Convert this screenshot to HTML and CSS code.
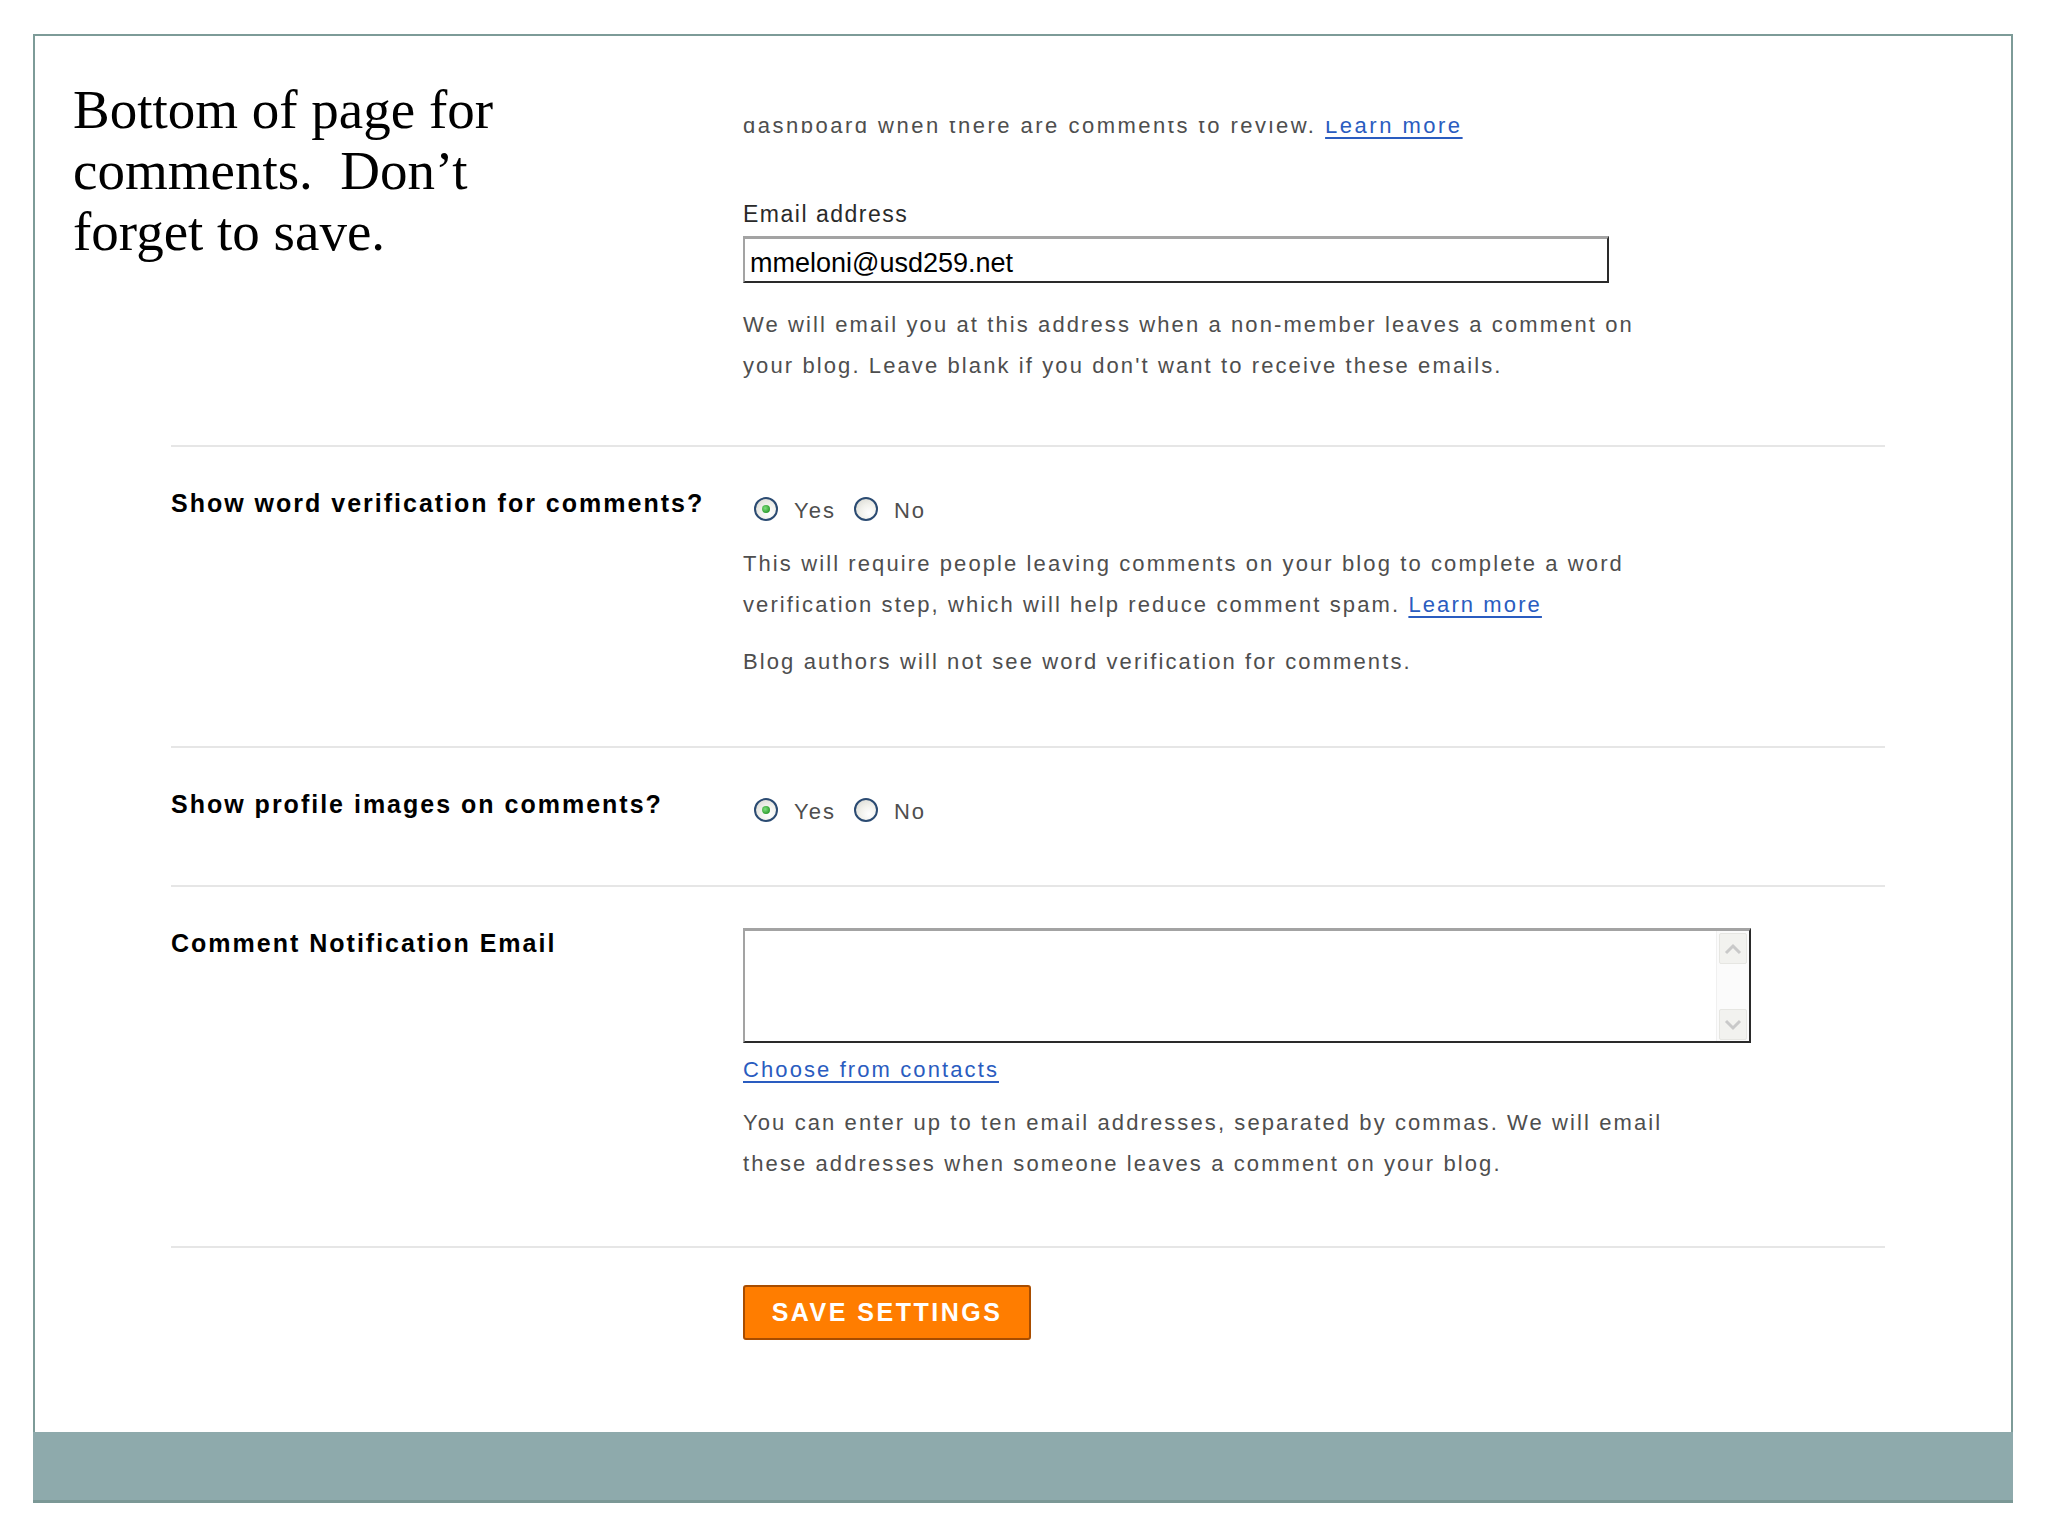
FILE: index.html
```html
<!DOCTYPE html>
<html>
<head>
<meta charset="utf-8">
<title>Comment settings</title>
<link rel="stylesheet" href="styles.css">
</head>
<body>
<div class="slide">
  <div class="frame">
    <div class="top">
      <h1 class="title">Bottom of page for<br>comments.&nbsp; Don’t<br>forget to save.</h1>
      <div class="top-right">
        <div class="clip"><p class="help cut">dashboard when there are comments to review. <a class="link" href="#">Learn more</a></p></div>
        <div class="field-label">Email address</div>
        <div class="input">mmeloni@usd259.net</div>
        <p class="help gap-para">We will email you at this address when a non-member leaves a comment on<br>your blog. Leave blank if you don't want to receive these emails.</p>
      </div>
    </div>

    <div class="rows">
      <div class="row row-verify">
        <div class="label">Show word verification for comments?</div>
        <div class="ctrl">
          <div class="radios">
            <span class="radio checked"></span><span class="opt">Yes</span>
            <span class="radio"></span><span class="opt">No</span>
          </div>
          <p class="help after-radio">This will require people leaving comments on your blog to complete a word<br>verification step, which will help reduce comment spam. <a class="link" href="#">Learn more</a></p>
          <p class="help note">Blog authors will not see word verification for comments.</p>
        </div>
      </div>

      <div class="row row-profile">
        <div class="label">Show profile images on comments?</div>
        <div class="ctrl">
          <div class="radios">
            <span class="radio checked"></span><span class="opt">Yes</span>
            <span class="radio"></span><span class="opt">No</span>
          </div>
        </div>
      </div>

      <div class="row row-notify">
        <div class="label">Comment Notification Email</div>
        <div class="ctrl">
          <div class="textarea">
            <div class="sb">
              <span class="sb-btn"><svg width="20" height="12" viewBox="0 0 20 12"><path d="M3 10 L10 3 L17 10" fill="none" stroke="#c9c9c9" stroke-width="3"/></svg></span>
              <span class="sb-btn"><svg width="20" height="12" viewBox="0 0 20 12"><path d="M3 2 L10 9 L17 2" fill="none" stroke="#c9c9c9" stroke-width="3"/></svg></span>
            </div>
          </div>
          <a class="link contacts" href="#">Choose from contacts</a>
          <p class="help after-link">You can enter up to ten email addresses, separated by commas. We will email<br>these addresses when someone leaves a comment on your blog.</p>
        </div>
      </div>

      <div class="row row-save">
        <div class="label"></div>
        <div class="ctrl">
          <button class="save" type="button">SAVE SETTINGS</button>
        </div>
      </div>
    </div>
  </div>
  <div class="bar"></div>
</div>
</body>
</html>
```

FILE: styles.css
```css
html, body {
  margin: 0;
  padding: 0;
  background: #ffffff;
}

.slide {
  width: 1980px;
  margin: 34px 0 0 33px;
}

.frame {
  box-sizing: border-box;
  height: 1398px;
  border: 2px solid #7d9b98;
  border-bottom: none;
  background: #ffffff;
  overflow: hidden;
}

.bar {
  height: 68px;
  background: #8eaaac;
  border-bottom: 3px solid #7b9896;
}

/* top section */
.top {
  display: flex;
  align-items: flex-start;
}

.title {
  box-sizing: border-box;
  width: 708px;
  margin: 43px 0 0 0;
  padding-left: 38px;
  font-family: "Liberation Serif", serif;
  font-weight: normal;
  font-size: 55px;
  line-height: 61px;
  color: #000000;
  white-space: nowrap;
}

.top-right {
  padding-top: 85px;
}

.clip {
  height: 23px;
  overflow: hidden;
}

.help {
  margin: 0;
  font-family: "Liberation Sans", Arial, sans-serif;
  font-size: 22px;
  line-height: 41px;
  letter-spacing: 2.1px;
  color: #4e4e4e;
  white-space: nowrap;
}

.help.cut {
  margin-top: -16px;
  letter-spacing: 2.5px;
}

.link {
  color: #2a5cc0;
  text-decoration: underline;
  text-decoration-thickness: 2px;
  text-underline-offset: 4px;
}

.field-label {
  margin-top: 56px;
  font-family: "Liberation Sans", Arial, sans-serif;
  font-size: 23px;
  line-height: 28px;
  letter-spacing: 1.5px;
  color: #2a2a2a;
}

.input {
  box-sizing: border-box;
  width: 866px;
  height: 47px;
  margin-top: 8px;
  padding: 4px 0 0 5px;
  border-top: 3px solid #a3a3a3;
  border-left: 2px solid #a3a3a3;
  border-right: 2px solid #2a2a2a;
  border-bottom: 2px solid #2a2a2a;
  background: #ffffff;
  font-family: "Liberation Sans", Arial, sans-serif;
  font-size: 27px;
  line-height: 40px;
  color: #000000;
}

.gap-para {
  margin-top: 21px;
}

/* rows */
.rows {
  margin: 59px 0 0 136px;
  width: 1714px;
}

.row {
  display: grid;
  grid-template-columns: 572px 1fr;
  border-top: 2px solid #e6e6e6;
  padding-top: 41px;
}

.row-verify { padding-bottom: 64px; }
.row-profile { padding-bottom: 63px; }
.row-notify { padding-bottom: 62px; }
.row-save { padding-top: 37px; }

.label {
  font-family: "Liberation Sans", Arial, sans-serif;
  font-weight: bold;
  font-size: 25px;
  line-height: 30px;
  letter-spacing: 2px;
  color: #000000;
  white-space: nowrap;
}

.radios {
  display: flex;
  align-items: center;
  height: 24px;
  margin-top: 9px;
}

.radio {
  box-sizing: border-box;
  width: 24px;
  height: 24px;
  border-radius: 50%;
  border: 2px solid #2b4b72;
  background: radial-gradient(circle at 65% 70%, #ffffff 0%, #f1f1ec 45%, #d6d6cf 100%);
  margin-left: 18px;
  position: relative;
}

.radio:first-child {
  margin-left: 11px;
}

.radio.checked::after {
  content: "";
  position: absolute;
  left: 6px;
  top: 6px;
  width: 8px;
  height: 8px;
  border-radius: 50%;
  background: radial-gradient(circle at 40% 40%, #7fe07f 0%, #2f9e2f 70%, #1f7a1f 100%);
}

.opt {
  margin-left: 16px;
  font-family: "Liberation Sans", Arial, sans-serif;
  font-size: 22px;
  letter-spacing: 2px;
  color: #4e4e4e;
  line-height: 24px;
  padding-top: 4px;
}

.after-radio { margin-top: 22px; }
.note { margin-top: 16px; }

/* textarea */
.textarea {
  box-sizing: border-box;
  width: 1008px;
  height: 115px;
  border-top: 3px solid #a3a3a3;
  border-left: 2px solid #a3a3a3;
  border-right: 2px solid #2a2a2a;
  border-bottom: 2px solid #2a2a2a;
  background: #ffffff;
  display: flex;
  justify-content: flex-end;
}

.sb {
  box-sizing: border-box;
  width: 33px;
  display: flex;
  flex-direction: column;
  justify-content: space-between;
  align-items: center;
  padding: 2px 0 1px 0;
  background: #fbfbfb;
  border-left: 1px solid #f0f0f0;
}

.sb-btn {
  box-sizing: border-box;
  width: 28px;
  height: 31px;
  display: flex;
  align-items: center;
  justify-content: center;
  background: #f2f2ef;
  border: 1px solid #e6e6e2;
  border-radius: 2px;
}

.contacts {
  display: block;
  width: max-content;
  margin-top: 6px;
  font-family: "Liberation Sans", Arial, sans-serif;
  font-size: 22px;
  line-height: 41px;
  letter-spacing: 2.1px;
}

.after-link { margin-top: 12px; }

/* save */
.save {
  box-sizing: border-box;
  width: 288px;
  height: 55px;
  margin: 0;
  padding: 0;
  border: 2px solid #a84d00;
  border-radius: 3px;
  background: #ff7d00;
  color: #ffffff;
  font-family: "Liberation Sans", Arial, sans-serif;
  font-weight: bold;
  font-size: 25px;
  letter-spacing: 2.5px;
  text-align: center;
}
```
